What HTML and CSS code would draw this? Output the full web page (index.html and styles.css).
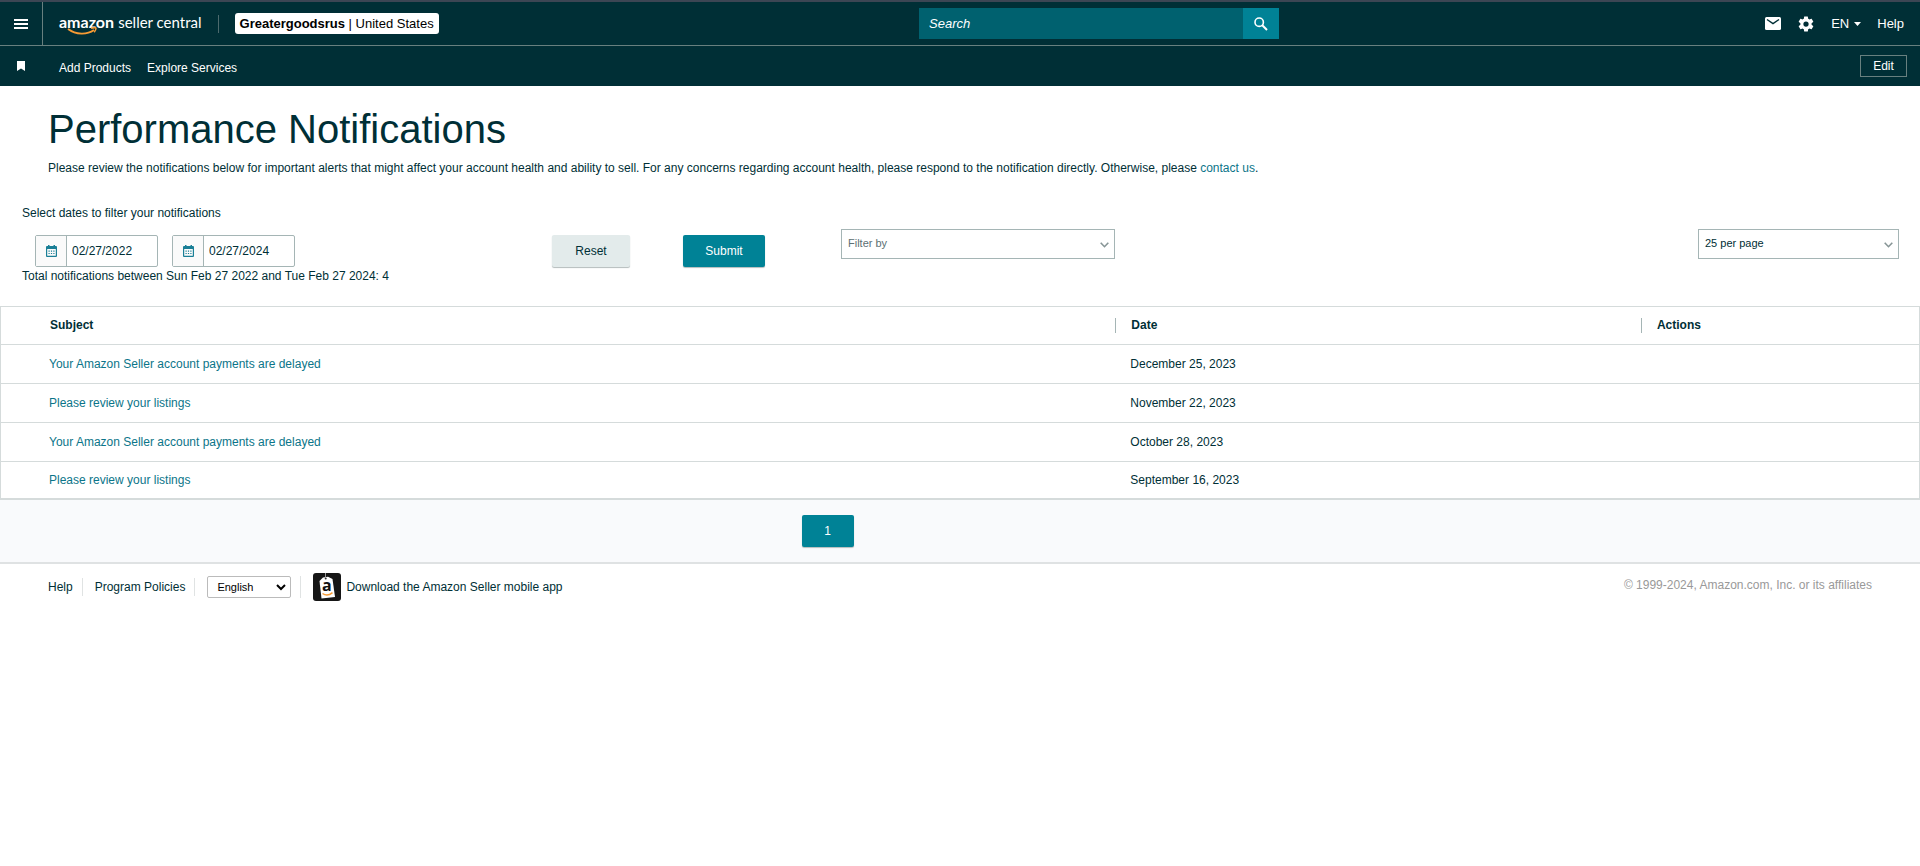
FILE: index.html
```html
<!DOCTYPE html>
<html lang="en">
<head>
    <meta charset="utf-8">
    <title>Performance Notifications</title>
    <link rel="stylesheet" href="styles.css">
</head>
<body>
    <header>
        <div class="topbar">
            <button class="menu-button" aria-label="Menu">
                <svg width="14" height="10" viewBox="0 0 14 10"><path d="M0 1h14M0 5h14M0 9h14" stroke="#fff" stroke-width="2"/></svg>
            </button>
            <a class="logo" href="#">
                <b>amazon</b> <span>seller central</span>
                <svg class="smile" width="32" height="8" viewBox="0 0 32 8" fill="none" stroke="#f79b34"><path d="M1 2c8 6 19 6 26 1" stroke-width="1.8"/><path d="M24 1.300c3-.9 5-.8 5 0s-.6 2.500-1.800 4" stroke-width="1.500"/></svg>
            </a>
            <button class="account"><b>Greatergoodsrus</b> | United States</button>
            <form class="search">
                <input type="text" placeholder="Search" aria-label="Search">
                <button type="button" aria-label="Go">
                    <svg width="14" height="14" viewBox="0 0 14 14" fill="none" stroke="#fff"><circle cx="5.200" cy="5.200" r="4.200" stroke-width="1.600"/><path d="M8.300 8.300l4.700 4.700" stroke-width="2"/></svg>
                </button>
            </form>
            <nav class="tools">
                <a href="#" aria-label="Messages">
                    <svg width="16" height="13" viewBox="0 0 16 13"><rect width="16" height="13" rx="1.500" fill="#fff"/><path d="M2 2.500l6 4 6-4" fill="none" stroke="#002f36" stroke-width="1.500"/></svg>
                </a>
                <a href="#" aria-label="Settings">
                    <svg width="18" height="18" viewBox="0 0 24 24"><path fill="#fff" d="M19.430 12.980c.04-.32.07-.64.07-.98s-.03-.66-.07-.98l2.110-1.650c.19-.15.24-.42.12-.64l-2-3.460c-.12-.22-.39-.3-.61-.22l-2.490 1c-.52-.4-1.080-.73-1.690-.98l-.38-2.650A.49.49 0 0 0 14 2h-4c-.25 0-.46.18-.49.42l-.38 2.650c-.61.25-1.170.59-1.690.98l-2.490-1c-.23-.09-.49 0-.61.22l-2 3.460c-.13.22-.07.49.12.64l2.110 1.650c-.04.32-.07.65-.07.98s.03.66.07.98l-2.110 1.650c-.19.15-.24.42-.12.64l2 3.460c.12.22.39.3.61.22l2.490-1c.52.4 1.080.73 1.690.98l.38 2.650c.03.24.24.42.49.42h4c.25 0 .46-.18.49-.42l.38-2.650c.61-.25 1.170-.59 1.690-.98l2.490 1c.23.09.49 0 .61-.22l2-3.460c.12-.22.07-.49-.12-.64zM12 15.500a3.500 3.500 0 1 1 0-7 3.500 3.500 0 0 1 0 7z"/></svg>
                </a>
                <button class="language">EN <svg width="7" height="4" viewBox="0 0 7 4"><path d="M0 0h7L3.500 4z" fill="#fff"/></svg></button>
                <a href="#">Help</a>
            </nav>
        </div>
        <nav class="subbar">
            <svg class="bookmark" width="8" height="10" viewBox="0 0 8 10"><path d="M0 0h8v10L4 7.500 0 10z" fill="#fff"/></svg>
            <a href="#">Add Products</a>
            <a href="#">Explore Services</a>
            <button class="edit">Edit</button>
        </nav>
    </header>

    <main>
        <div class="intro">
            <h1>Performance Notifications</h1>
            <p>Please review the notifications below for important alerts that might affect your account health and ability to sell. For any concerns regarding account health, please respond to the notification directly. Otherwise, please <a href="#">contact us</a>.</p>
        </div>

        <section class="filters">
            <p>Select dates to filter your notifications</p>
            <div class="filter-row">
                <div class="dates">
                    <label class="date">
                        <span class="calendar"><svg width="11" height="12" viewBox="0 0 11 12"><path fill="#1a7f96" fill-rule="evenodd" d="M2 0h1.500v1h4V0H9v1h1a1 1 0 0 1 1 1v9a1 1 0 0 1-1 1H1a1 1 0 0 1-1-1V2a1 1 0 0 1 1-1h1zM1.200 4v6.800h8.600V4z"/><path d="M2.500 6.200h6M2.500 8.500h6" stroke="#1a7f96" stroke-width="1.200" stroke-dasharray="1.200"/></svg></span>
                        <input type="text" value="02/27/2022" aria-label="Start date">
                    </label>
                    <label class="date">
                        <span class="calendar"><svg width="11" height="12" viewBox="0 0 11 12"><path fill="#1a7f96" fill-rule="evenodd" d="M2 0h1.500v1h4V0H9v1h1a1 1 0 0 1 1 1v9a1 1 0 0 1-1 1H1a1 1 0 0 1-1-1V2a1 1 0 0 1 1-1h1zM1.200 4v6.800h8.600V4z"/><path d="M2.500 6.200h6M2.500 8.500h6" stroke="#1a7f96" stroke-width="1.200" stroke-dasharray="1.200"/></svg></span>
                        <input type="text" value="02/27/2024" aria-label="End date">
                    </label>
                </div>
                <div class="action"><button class="button reset">Reset</button></div>
                <div class="action"><button class="button submit">Submit</button></div>
                <div class="dropdown filter-by">
                    <select aria-label="Filter by"><option>Filter by</option></select>
                    <svg width="9" height="6" viewBox="0 0 9 6"><path d="M.7.700l3.800 4 3.800-4" fill="none" stroke="#879596" stroke-width="1.600"/></svg>
                </div>
                <div class="dropdown per-page">
                    <select aria-label="Rows per page"><option>25 per page</option></select>
                    <svg width="9" height="6" viewBox="0 0 9 6"><path d="M.7.700l3.800 4 3.800-4" fill="none" stroke="#879596" stroke-width="1.600"/></svg>
                </div>
            </div>
            <p>Total notifications between Sun Feb 27 2022 and Tue Feb 27 2024: 4</p>
        </section>

        <table>
            <thead>
                <tr><th class="subject">Subject</th><th class="day"><span>Date</span></th><th><span>Actions</span></th></tr>
            </thead>
            <tbody>
                <tr><td><a href="#">Your Amazon Seller account payments are delayed</a></td><td>December 25, 2023</td><td></td></tr>
                <tr><td><a href="#">Please review your listings</a></td><td>November 22, 2023</td><td></td></tr>
                <tr><td><a href="#">Your Amazon Seller account payments are delayed</a></td><td>October 28, 2023</td><td></td></tr>
                <tr><td><a href="#">Please review your listings</a></td><td>September 16, 2023</td><td></td></tr>
            </tbody>
        </table>
        <div class="pagination"><button class="page">1</button></div>
    </main>

    <footer>
        <a class="item" href="#">Help</a>
        <a class="item" href="#">Program Policies</a>
        <div class="item"><select aria-label="Language"><option>English</option></select><svg width="10" height="7" viewBox="0 0 10 7"><path d="M1 1l4 4 4-4" fill="none" stroke="#000" stroke-width="2"/></svg></div>
        <a class="app" href="#">
            <svg width="28" height="28" viewBox="0 0 28 28">
                <rect width="28" height="28" rx="3" fill="#161616"/>
                <path d="M6.500 8l3.500-3.500 5-.7 4.500 2.200 2.500 18-13.500 1.500z" fill="#fff"/>
                <path d="M12.500 0v4" stroke="#999"/>
                <circle cx="12.700" cy="5.500" r="1" fill="#333"/>
                <text x="9" y="18" font-family="Open Sans, sans-serif" font-weight="bold" font-size="16" fill="#111">a</text>
                <path d="M9.500 20.500c3 2.200 7 1.700 10-.8" fill="none" stroke="#f79b34" stroke-width="1.500"/>
            </svg>
            Download the Amazon Seller mobile app
        </a>
        <span class="copyright">© 1999-2024, Amazon.com, Inc. or its affiliates</span>
    </footer>
</body>
</html>
```
FILE: styles.css
```css
* {
    box-sizing: border-box;
}

body {
    margin: 0;
    font: 12px/18px "Liberation Sans", Arial, sans-serif;
    color: #002f36;
    background-color: #fff;
}

button, input, select {
    font: inherit;
    color: inherit;
    margin: 0;
    border: 0;
    border-radius: 0;
    background: none;
}

button {
    padding: 0;
}

select {
    appearance: none;
}

a {
    color: #0b7589;
    text-decoration: none;
}

svg {
    display: block;
}

h1, p {
    margin: 0;
}

/* header */
header {
    background-color: #002f36;
    color: #fff;
    border-top: 2px solid #3c4654;
}

header a {
    color: #fff;
}

.topbar {
    display: flex;
    align-items: center;
    height: 44px;
    border-bottom: 1px solid #68807f;
    font-size: 13px;
}

.menu-button {
    align-self: stretch;
    width: 43px;
    padding-left: 14px;
    border-right: 1px solid #68807f;
}

.logo {
    position: relative;
    margin-left: 16px;
    padding: 1px 16px 5px 0;
    border-right: 1px solid #4d6a6d;
    font: 16px/12px Lato, sans-serif;
}

.logo span {
    font-size: 15px;
}

.smile {
    position: absolute;
    left: 8px;
    top: 12px;
}

.account {
    height: 21px;
    margin-left: 16px;
    padding: 0 5px;
    border-radius: 3px;
    background-color: #fff;
    color: #000;
}

.search {
    flex: none;
    display: flex;
    width: 360px;
    height: 31px;
    margin-left: auto;
}

.search input {
    flex: 1;
    min-width: 0;
    padding: 0 10px;
    background-color: #00616f;
    font-style: italic;
}

.search input::placeholder {
    color: #fff;
}

.search button {
    width: 36px;
    padding-left: 11px;
    background-color: #008296;
}

.tools {
    flex: 0 1 641px;
    display: flex;
    align-items: center;
    justify-content: flex-end;
    gap: 16px;
    padding-right: 16px;
}

.language {
    display: flex;
    align-items: center;
    gap: 5px;
}

.subbar {
    display: flex;
    align-items: center;
    height: 40px;
    padding: 0 13px 0 17px;
}

.subbar a {
    margin: 3px 16px 0 0;
}

.bookmark {
    margin-right: 34px;
}

.edit {
    width: 47px;
    height: 22px;
    margin-left: auto;
    border: 1px solid #68807f;
}

/* title and filters */
.intro {
    padding: 19px 48px 0;
}

h1 {
    font-size: 40px;
    line-height: 48px;
    font-weight: normal;
}

.intro p {
    margin-top: 6px;
}

.filters {
    padding: 27px 21px 21px 22px;
}

.filter-row {
    display: grid;
    grid-template-columns: 530fr 131fr 158fr 274fr 784fr;
    margin-top: 7px;
}

.dates {
    display: flex;
    gap: 14px;
    padding: 6px 0 0 13px;
}

.date {
    display: flex;
    width: 123px;
    height: 32px;
    border: 1px solid #a5b5b5;
    border-radius: 2px;
}

.calendar {
    flex: none;
    width: 31px;
    padding: 9px 0 0 10px;
    background-color: #fafafa;
    border-right: 1px solid #a5b5b5;
}

.date input {
    width: 100%;
    min-width: 0;
    padding: 0 5px 1px;
}

.action {
    padding-top: 6px;
}

.button, .page {
    height: 32px;
    border-radius: 2px;
    box-shadow: 0 1px 1px #b4bcbc;
}

.reset {
    width: 78px;
    background-color: #e3ebeb;
}

.submit {
    width: 82px;
}

.submit, .page {
    background-color: #008296;
    color: #fff;
}

.dropdown {
    position: relative;
    height: 30px;
}

.dropdown select {
    width: 100%;
    height: 30px;
    padding: 0 6px 2px;
    border: 1px solid #a5b5b5;
    font-size: 11px;
}

.filter-by select {
    color: #5c6f73;
}

.per-page {
    width: 201px;
    justify-self: end;
}

.dropdown svg {
    position: absolute;
    right: 6px;
    top: 13px;
    pointer-events: none;
}

/* notifications */
table {
    width: 100%;
    table-layout: fixed;
    border-collapse: separate;
    border-spacing: 0;
    border: 1px solid #d5dbdb;
    border-bottom: 0;
}

th, td {
    height: 39px;
    padding: 0 15px 1px;
    border-bottom: 1px solid #d5dbdb;
    text-align: left;
}

th {
    height: 38px;
    padding-left: 0;
    line-height: 15px;
}

.subject {
    width: 58.1%;
}

.day {
    width: 27.4%;
}

th span {
    display: block;
    padding-left: 15px;
    border-left: 1px solid #a5b5b5;
}

th:first-child {
    padding-left: 49px;
}

td:first-child {
    padding-left: 48px;
}

tbody tr:last-child td {
    height: 38px;
    border-bottom-width: 2px;
}

.pagination {
    height: 64px;
    padding: 15px 13.8% 0 0;
    background-color: #f9fafc;
    border-bottom: 2px solid #dfe2e3;
    text-align: center;
}

.page {
    width: 52px;
}

/* footer */
footer {
    display: flex;
    align-items: center;
    padding: 9px 48px;
}

footer a {
    color: #002f36;
}

.item {
    position: relative;
    margin-right: 12px;
    padding-right: 9px;
    border-right: 1px solid #e0e3e3;
}

.item select {
    display: block;
    width: 84px;
    height: 22px;
    padding: 0 9px;
    border: 1px solid #bbb;
    border-radius: 2px;
    color: #000;
    font-size: 11px;
}

.item svg {
    position: absolute;
    right: 14px;
    top: 8px;
    pointer-events: none;
}

.app {
    display: flex;
    align-items: center;
    gap: 5px;
}

.copyright {
    margin-left: auto;
    padding-bottom: 4px;
    color: #999;
}
```
